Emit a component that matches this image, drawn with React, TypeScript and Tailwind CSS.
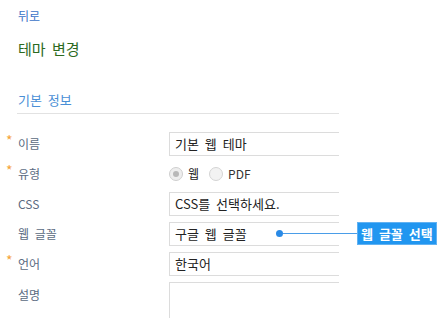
export default function App() {
  const rows = [
    { label: "이름", required: true, value: "기본 웹 테마" },
    { label: "유형", required: true, radio: true },
    { label: "CSS", value: "CSS를 선택하세요." },
    { label: "웹 글꼴", value: "구글 웹 글꼴" },
    { label: "언어", required: true, value: "한국어" },
  ]

  return (
    <div
      className="relative w-[438px] h-[318px] overflow-hidden bg-white [word-spacing:3px]"
      style={{ fontFamily: '"Noto Sans CJK KR", "Noto Sans", sans-serif' }}
    >
      <div className="w-[339px] overflow-hidden pl-[18px]">
        <div className="pt-[7px] h-[26px] text-[12px] leading-[18px] text-[#3b73c8]">뒤로</div>
        <div className="mt-[13px] text-[15px] leading-[20px] text-[#2d6a1f]">테마 변경</div>
        <div className="mt-[32px] text-[13px] leading-[18px] text-[#4a8fd6]">기본 정보</div>
        <div className="mt-[4px] -ml-px h-px bg-[#e2e2e2]" />

        <div className="mt-[18px] flex flex-col gap-[6px]">
          {rows.map((r) => (
            <div key={r.label} className="relative flex h-[24px] items-center">
              {r.required && (
                <span className="absolute left-[-12px] top-[1px] text-[14px] leading-[14px] text-[#f5a43a]">*</span>
              )}
              <div className="w-[151px] shrink-0 text-[12px] text-[#5b6b82]">{r.label}</div>
              {r.radio ? (
                <div className="flex items-center text-[12px] text-[#222]">
                  <span className="flex h-[14px] w-[14px] items-center justify-center rounded-full border border-[#cfcfcf] bg-[#eeeeee]">
                    <span className="h-[6px] w-[6px] rounded-full bg-[#b8b8b8]" />
                  </span>
                  <span className="ml-[5px]">웹</span>
                  <span className="ml-[10px] h-[14px] w-[14px] rounded-full border border-[#d4d4d4] bg-[#f2f2f2]" />
                  <span className="ml-[5px] text-[#333]">PDF</span>
                </div>
              ) : (
                <div className="h-[24px] w-[200px] shrink-0 border border-[#dcdcdc] pl-[5px] text-[13px] leading-[22px] text-[#222]">
                  {r.value}
                </div>
              )}
            </div>
          ))}
          <div className="flex">
            <div className="w-[151px] shrink-0 pt-[4px] text-[12px] text-[#5b6b82]">설명</div>
            <div className="h-[60px] w-[200px] shrink-0 border border-[#dcdcdc]" />
          </div>
        </div>
      </div>

      {/* callout */}
      <div className="absolute left-[276px] top-[222px] flex items-center">
        <span className="h-[7px] w-[7px] rounded-full bg-[#2a8ae6]" />
        <span className="h-px w-[74px] bg-[#4a9de8]" />
        <span className="border border-[#62b2f2] bg-[#2196f0] px-[3px] text-[13px] font-bold leading-[21px] text-white">
          웹 글꼴 선택
        </span>
      </div>
    </div>
  )
}
